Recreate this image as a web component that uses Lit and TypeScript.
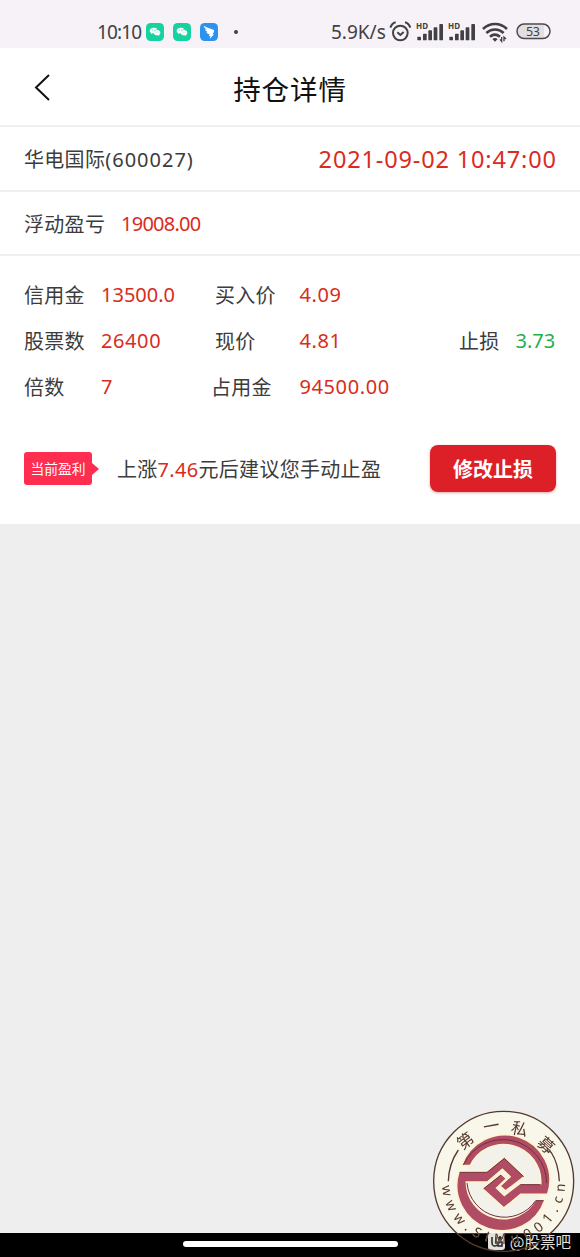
import { LitElement, html, svg, css } from 'lit';
import { customElement, property } from 'lit/decorators.js';

@customElement('status-bar')
export class StatusBar extends LitElement {
  static styles = css`
    :host {
      display: flex;
      align-items: center;
      justify-content: space-between;
      height: 48px;
      padding: 15px 29px 0 97px;
      box-sizing: border-box;
      background: #f6f2f7;
      color: #414042;
      font-size: 19px;
      line-height: 32px;
    }

    .group {
      display: flex;
      align-items: center;
      height: 32px;
    }

    .time {
      width: 49px;
      letter-spacing: -0.85px;
    }

    .speed {
      width: 58px;
      letter-spacing: 0;
    }

    .app {
      margin-right: 9px;
    }

    .dot {
      width: 4px;
      height: 4px;
      margin-left: 7px;
      border-radius: 50%;
      background: #414042;
    }

    .signal {
      margin-left: 4px;
    }

    .wifi {
      margin-left: 6px;
    }

    .battery {
      margin-left: 8px;
    }

    svg {
      display: block;
      flex-shrink: 0;
      overflow: visible;
    }
  `;

  chatIcon() {
    return html`
      <svg class="app" width="18" height="18" viewBox="0 0 54 54">
        <rect width="54" height="54" rx="14" fill="#15d2a0" />
        <path d="M23 14c-7 0-12 4-12 9 0 3 2 6 5 7l-1 4 5-3h4c-1-7 4-12 11-12-2-3-6-5-12-5z" fill="#fff" />
        <path d="M33 21c-6 0-10 4-10 8s4 8 10 8l3-.5 4 2.500-1-4c3-1 4-4 4-6 0-4-4-8-10-8z" fill="#fff" />
        <g fill="#15d2a0">
          <circle cx="19" cy="21" r="1.500" />
          <circle cx="26" cy="21" r="1.500" />
          <circle cx="30" cy="27" r="1.300" />
          <circle cx="36" cy="27" r="1.300" />
        </g>
      </svg>
    `;
  }

  signalIcon() {
    return html`
      <svg class="signal" width="28" height="20" viewBox="0 0 84 60">
        <text x="0" y="20" font-size="24" font-weight="700" textLength="36" fill="#414042">HD</text>
        <g fill="#414042">
          <rect x="4" y="44" width="11" height="11" rx="2" />
          <rect x="21" y="35" width="11" height="20" rx="2" />
          <rect x="37" y="25" width="11" height="30" rx="2" />
          <rect x="53" y="16" width="11" height="39" rx="2" />
          <rect x="70" y="6" width="11" height="49" rx="2" />
        </g>
      </svg>
    `;
  }

  render() {
    return html`
      <div class="group">
        <span class="time">10:10</span>
        ${this.chatIcon()} ${this.chatIcon()}
        <svg class="app" width="18" height="18" viewBox="0 0 54 54">
          <rect width="54" height="54" rx="14" fill="#2a92f0" />
          <path d="M11 8c9 6 19 8 29 12 3 1 3 4 2 6l-4 8h4L29 48l2-9h-5l3-5c-6-1-9-4-10-7l5 1c-6-3-8-6-9-9l6 1c-6-4-9-7-10-12z" fill="#fff" />
        </svg>
        <span class="dot"></span>
      </div>
      <div class="group">
        <span class="speed">5.9K/s</span>
        <svg width="23" height="22" viewBox="0 0 69 66" fill="none" stroke="#414042" stroke-width="6">
          <circle cx="34" cy="36" r="22" />
          <path d="M25 34l9 8 10-9M4 20C7 12 12 6 20 4M48 4c8 2 13 8 16 16" />
        </svg>
        ${this.signalIcon()} ${this.signalIcon()}
        <svg class="wifi" width="26" height="20" viewBox="0 0 78 60">
          <g fill="none" stroke="#414042" stroke-width="8">
            <path d="M3 21C24 1 54 1 75 21" />
            <path d="M13 33c15-14 37-14 52 0" />
            <path d="M24 44c9-8 20-8 30 0" />
          </g>
          <path d="M31 51c5-4 11-4 16 0l-8 8z" fill="#414042" />
          <path d="M59 45v13l-5-6M66 58V45l6 6" fill="none" stroke="#414042" stroke-width="4" />
        </svg>
        <svg class="battery" width="35" height="17" viewBox="0 0 35 17">
          <rect x="1" y="1" width="33" height="14.500" rx="7.200" fill="#f6f2f7" />
          <path d="M8 1.500h20v13.500H8a6.700 6.700 0 0 1 0-13.500z" fill="#e2dfe3" />
          <rect x="1" y="1" width="33" height="14.500" rx="7.200" fill="none" stroke="#4b4a4c" stroke-width="1.500" />
          <text x="17" y="12.800" font-size="12.500" text-anchor="middle" textLength="14" fill="#414042">53</text>
        </svg>
      </div>
    `;
  }
}

@customElement('data-field')
export class DataField extends LitElement {
  static styles = css`
    :host {
      display: flex;
      white-space: nowrap;
    }

    .label {
      width: var(--label-width, 77px);
      margin: -1px 0 1px;
      letter-spacing: 0.3px;
    }

    .value {
      color: #d92c1c;
      letter-spacing: var(--value-spacing, 0.6px);
    }

    .value.down {
      color: #1fb14c;
    }
  `;

  @property({ type: String }) label = '';

  @property({ type: String }) value = '';

  @property({ type: Boolean }) down = false;

  render() {
    return html`
      <span class="label">${this.label}</span>
      <span class="value ${this.down ? 'down' : ''}">${this.value}</span>
    `;
  }
}

@customElement('round-seal')
export class RoundSeal extends LitElement {
  static styles = css`
    :host {
      display: block;
    }

    svg {
      display: block;
    }

    .lettering {
      fill: #54392f;
      filter: drop-shadow(0 0 2px rgba(255, 244, 207, 0.6));
    }

    .name {
      font-family: 'Noto Sans CJK SC', sans-serif;
      font-size: 49px;
      text-anchor: middle;
    }

    .url {
      font-family: 'Noto Sans', sans-serif;
      font-size: 41px;
    }
  `;

  glyph(char: string, x: number, y: number, angle: number) {
    return svg`<text class="name" transform="translate(${x} ${y}) rotate(${angle})" y="18">${char}</text>`;
  }

  render() {
    return html`
      <svg width="160" height="157" viewBox="0 0 480 471">
        <defs>
          <clipPath id="page"><rect width="480" height="400" /></clipPath>
          <path id="rim" d="M66 258A185 185 0 0 0 435 262" />
        </defs>
        <g clip-path="url(#page)">
          <circle cx="251" cy="244" r="210" fill="#f9f7ea" />
          <circle cx="251" cy="247" r="116" fill="#f3f2ea" />
        </g>
        <circle cx="251" cy="244" r="210" fill="none" stroke="#54392f" stroke-width="4" />
        <path d="M85 244Q86 192 115 150M418 244Q416 192 393 156M393 156l-14-4" fill="none" stroke="#54392f" stroke-width="4" />
        <g transform="translate(105 99)" fill="#b04c63" stroke="#fff4cf" stroke-width="5">
          <path d="M12 115H95L148 72 209 130 152 174 135 159 165 131 142 109 98 147H34A111 111 0 0 0 242 200H270A135 135 0 0 1 12 115Z" />
          <path d="M20 98A135 135 0 0 1 278 184H197L147 225 82 167 138 122 155 137 125 165 148 187 194 152H257A111 111 0 0 0 46 98Z" />
        </g>
        <g transform="translate(105 99)" fill="none" stroke="#70323e" stroke-width="3">
          <path d="M14 118H96L148 76 206 131M25 96A131 131 0 0 1 275 150M196 155H256M36 150A113 113 0 0 0 242 203H266M86 167L138 126" />
        </g>
        <g class="lettering">
          ${this.glyph('第', 136, 122, -38)}
          ${this.glyph('一', 214, 78, -10)}
          ${this.glyph('私', 299, 86, 13)}
          ${this.glyph('募', 378, 135, 42)}
          <text class="url" textLength="565"><textPath href="#rim" textLength="565">www.SiMu001.cn</textPath></text>
        </g>
      </svg>
    `;
  }
}

@customElement('app-root')
export class AppRoot extends LitElement {
  static styles = css`
    :host {
      position: relative;
      display: flex;
      flex-direction: column;
      height: 1257px;
      overflow: hidden;
      background: #eeeeee;
      color: #3c3c3c;
      font-family: 'Noto Sans', 'Noto Sans CJK SC', sans-serif;
      font-size: 20px;
    }

    header {
      display: grid;
      grid-template-columns: 60px 1fr 60px;
      align-items: center;
      height: 77px;
      background: #fff;
      color: #111;
    }

    .back {
      display: block;
      margin-left: 33px;
    }

    h1 {
      margin: 0;
      padding-top: 2px;
      text-align: center;
      font-size: 27.5px;
      font-weight: 400;
      letter-spacing: 0.9px;
    }

    .row {
      display: flex;
      align-items: center;
      justify-content: space-between;
      height: 65px;
      padding: 0 24px 0;
      box-sizing: border-box;
      border-top: 2px solid #efefef;
      background: #fff;
    }

    .row.floating {
      height: 64px;
      padding-top: 2px;
      --label-width: 97px;
      --value-spacing: -0.75px;
    }

    .stock {
      letter-spacing: 0.3px;
    }

    .code {
      letter-spacing: 1px;
    }

    .date {
      margin-right: -0.8px;
      color: #d92c1c;
      font-size: 23.5px;
      letter-spacing: 0.85px;
    }

    .detail {
      height: 270px;
      padding: 16px 24px 0;
      box-sizing: border-box;
      border-top: 2px solid #efefef;
      background: #fff;
    }

    .fields {
      display: grid;
      grid-template-columns: 191px 244px 1fr;
      grid-auto-rows: 46px;
      align-items: center;
    }

    .margin {
      --value-spacing: 0;
    }

    .price {
      --label-width: 84.5px;
    }

    .occupied {
      --label-width: 88.5px;
      margin-left: -4px;
    }

    .stop {
      --label-width: 56.5px;
      --value-spacing: 0;
    }

    .advice {
      display: flex;
      align-items: center;
      margin-top: 34px;
      height: 49px;
    }

    .tag {
      display: flex;
      align-items: center;
      margin-right: 18px;
      color: #fff;
      font-size: 13.800px;
      line-height: 33px;
    }

    .tag-text {
      width: 68px;
      border-radius: 3px;
      background: #ff2d4f;
      text-align: center;
    }

    .tag-arrow {
      border: solid transparent;
      border-width: 6px 0 6px 7px;
      border-left-color: #ff2d4f;
    }

    .tip {
      flex: 1;
      letter-spacing: 0.3px;
      white-space: nowrap;
    }

    .tip em {
      color: #d92c1c;
      font-style: normal;
    }

    button {
      width: 126px;
      height: 47px;
      padding: 0;
      border: 0;
      border-radius: 8px;
      background: #dd2027;
      box-shadow: 0 1px 3px rgba(160, 0, 0, 0.35);
      color: #fff;
      font: 700 20px 'Noto Sans CJK SC', sans-serif;
    }

    .nav {
      display: flex;
      justify-content: center;
      align-items: center;
      height: 24px;
      margin-top: auto;
      background: #000;
    }

    .handle {
      width: 215px;
      height: 6px;
      margin-bottom: 3px;
      border-radius: 3px;
      background: #fff;
    }

    round-seal {
      position: absolute;
      right: 0;
      bottom: 0;
    }

    .credit {
      position: absolute;
      right: 9px;
      bottom: 5px;
      display: flex;
      align-items: center;
      gap: 5px;
      color: #e3e1dc;
      font: 15.500px/22px 'Noto Sans CJK SC', sans-serif;
    }
  `;

  render() {
    return html`
      <status-bar></status-bar>
      <header>
        <svg class="back" width="18" height="28" viewBox="0 0 18 28" fill="none" stroke="#111" stroke-width="2">
          <path d="M16 2L3 14.500 16 27" />
        </svg>
        <h1>持仓详情</h1>
      </header>
      <div class="row">
        <span class="stock">华电国际<span class="code">(600027)</span></span>
        <span class="date">2021-09-02 10:47:00</span>
      </div>
      <div class="row floating">
        <data-field label="浮动盈亏" value="19008.00"></data-field>
      </div>
      <section class="detail">
        <div class="fields">
          <data-field class="margin" label="信用金" value="13500.0"></data-field>
          <data-field class="price" label="买入价" value="4.09"></data-field>
          <span></span>
          <data-field label="股票数" value="26400"></data-field>
          <data-field class="price" label="现价" value="4.81"></data-field>
          <data-field class="stop" label="止损" value="3.73" down></data-field>
          <data-field label="倍数" value="7"></data-field>
          <data-field class="occupied" label="占用金" value="94500.00"></data-field>
        </div>
        <div class="advice">
          <div class="tag">
            <span class="tag-text">当前盈利</span>
            <span class="tag-arrow"></span>
          </div>
          <div class="tip">上涨<em>7.46</em>元后建议您手动止盈</div>
          <button>修改止损</button>
        </div>
      </section>
      <div class="nav"><div class="handle"></div></div>
      <div class="credit">
        <svg width="17" height="17" viewBox="0 0 17 17">
          <rect width="17" height="17" rx="3" fill="#e3e1dc" />
          <path d="M4 4v6c0 3 3 4 5 2M8 4v7M12 3v5M10 5h5M10 9h4v4h-4z" fill="none" stroke="#222" stroke-width="1.500" />
        </svg>
        <span>@股票吧</span>
      </div>
      <round-seal></round-seal>
    `;
  }
}
